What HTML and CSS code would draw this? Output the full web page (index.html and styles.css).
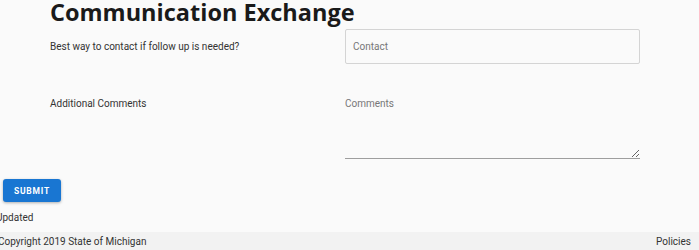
FILE: index.html
```html
<!DOCTYPE html>
<html lang="en">
<head>
    <meta charset="UTF-8">
    <meta name="viewport" content="width=device-width, initial-scale=1.0">
    <title>Communication Exchange</title>
    <link rel="stylesheet" href="styles.css">
</head>
<body>
    <div class="page">
        <form class="form-section">
            <h2 class="section-title">Communication Exchange</h2>

            <div class="form-row">
                <label class="form-label" for="contact">Best way to contact if follow up is needed?</label>
                <input class="text-input" id="contact" type="text" placeholder="Contact">
            </div>

            <div class="form-row comments-row">
                <label class="form-label" for="comments">Additional Comments</label>
                <textarea class="text-area" id="comments" placeholder="Comments"></textarea>
            </div>
        </form>

        <button class="submit-btn" type="button">Submit</button>
        <div class="updated">Updated</div>
    </div>

    <footer class="footer">
        <span class="copyright">Copyright 2019 State of Michigan</span>
        <a class="footer-link" href="#">Policies</a>
    </footer>
</body>
</html>
```

FILE: styles.css
```css
* {
    margin: 0;
    padding: 0;
    box-sizing: border-box;
}

html, body {
    height: 100%;
}

body {
    font-family: Roboto, 'Liberation Sans', Arial, sans-serif;
    background: #fafafa;
    color: #333;
    font-size: 10px;
    display: flex;
    flex-direction: column;
    overflow: hidden;
}

.page {
    flex: 1;
}

.form-section {
    padding-left: 50px;
}

.section-title {
    font-family: 'Open Sans', 'DejaVu Sans', sans-serif;
    font-weight: 700;
    font-size: 23.5px;
    line-height: 24px;
    color: #1a1a1a;
    height: 29px;
}

.form-row {
    display: grid;
    grid-template-columns: 295px 295px;
    align-items: center;
}

.form-label {
    font-size: 10px;
    color: #333;
}

.text-input {
    height: 35px;
    border: 1px solid #d4d4d4;
    border-radius: 2px;
    background: #fafafa;
    padding: 0 7px;
    font-family: inherit;
    font-size: 10px;
    color: #333;
    outline: none;
}

.text-input::placeholder,
.text-area::placeholder {
    color: #777;
}

.comments-row {
    margin-top: 27px;
    align-items: start;
}

.comments-row .form-label {
    padding-top: 7px;
}

.text-area {
    height: 68px;
    border: none;
    border-bottom: 1px solid #9e9e9e;
    background: transparent;
    padding-top: 7px;
    font-family: inherit;
    font-size: 10px;
    color: #333;
    resize: vertical;
    outline: none;
}

.submit-btn {
    display: block;
    margin: 20px 0 0 3px;
    width: 58px;
    height: 23px;
    background: #1976d2;
    color: #fff;
    border: none;
    border-radius: 3px;
    box-shadow: 0 1px 3px rgba(0, 0, 0, 0.3);
    font-family: Roboto, sans-serif;
    font-weight: 700;
    font-size: 8.5px;
    letter-spacing: 0.8px;
    text-transform: uppercase;
    cursor: pointer;
}

.updated {
    margin: 10px 0 0 -4px;
    font-size: 10px;
    color: #333;
}

.footer {
    height: 18px;
    background: #f2f2f2;
    display: flex;
    justify-content: space-between;
    align-items: center;
    padding: 0 8px 0 0;
    font-size: 10px;
    color: #333;
}

.copyright {
    margin-left: -2px;
}

.footer-link {
    color: #333;
    text-decoration: none;
}
```
